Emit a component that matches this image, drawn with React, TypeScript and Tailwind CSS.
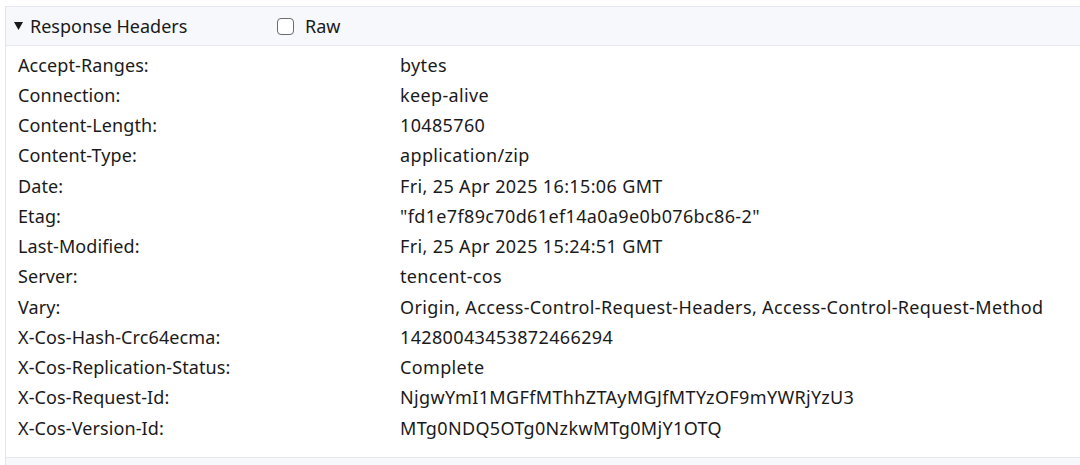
const rows: [string, string][] = [
  ["Accept-Ranges:", "bytes"],
  ["Connection:", "keep-alive"],
  ["Content-Length:", "10485760"],
  ["Content-Type:", "application/zip"],
  ["Date:", "Fri, 25 Apr 2025 16:15:06 GMT"],
  ["Etag:", "\"fd1e7f89c70d61ef14a0a9e0b076bc86-2\""],
  ["Last-Modified:", "Fri, 25 Apr 2025 15:24:51 GMT"],
  ["Server:", "tencent-cos"],
  ["Vary:", "Origin, Access-Control-Request-Headers, Access-Control-Request-Method"],
  ["X-Cos-Hash-Crc64ecma:", "14280043453872466294"],
  ["X-Cos-Replication-Status:", "Complete"],
  ["X-Cos-Request-Id:", "NjgwYmI1MGFfMThhZTAyMGJfMTYzOF9mYWRjYzU3"],
  ["X-Cos-Version-Id:", "MTg0NDQ5OTg0NzkwMTg0MjY1OTQ"],
];

export default function App() {
  return (
    <div className="h-[465px] w-[1080px] overflow-hidden bg-white pt-[6px] pl-[5px] text-[#1a1a1a] font-['Noto_Sans',sans-serif]">
      <div className="h-full border-l border-[#e3e5ee]">
        {/* Section header */}
        <div className="flex h-[40px] items-center border-y border-[#e6e7f0] bg-[#f7f8fc]">
          <div className="flex w-[271px] items-center pl-[8px] text-[18px]">
            <svg width="9" height="8" viewBox="0 0 9 8" className="mr-[7px]">
              <polygon points="0,0 9,0 4.5,8" fill="#1a1a1a" />
            </svg>
            <span>Response Headers</span>
          </div>
          <label className="flex items-center gap-[11px] text-[18px]">
            <span className="h-[17px] w-[17px] rounded-[4px] border-[1.5px] border-[#6b6b6b] bg-white"></span>
            <span>Raw</span>
          </label>
        </div>

        {/* Header rows */}
        <div className="pt-[4px] text-[18px]">
          {rows.map(([k, v]) => (
            <div key={k} className="flex h-[30.25px] items-center">
              <div className="w-[394px] pl-[12px] tracking-[0.1px]">{k}</div>
              <div className="tracking-[0.36px]">{v}</div>
            </div>
          ))}
        </div>
        <div className="mt-[14px] h-[20px] border-t border-[#e6e7f0] bg-[#f7f8fc]"></div>
      </div>
    </div>
  );
}
